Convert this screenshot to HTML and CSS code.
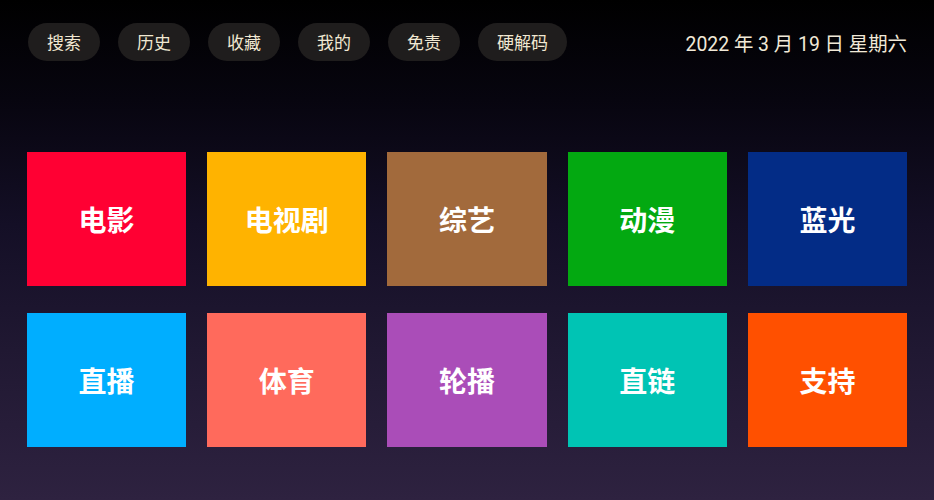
FILE: index.html
```html
<!DOCTYPE html>
<html lang="zh-CN">
<head>
<meta charset="utf-8">
<title>首页</title>
<link rel="stylesheet" href="styles.css">
</head>
<body>
<div class="screen">
  <header class="topbar">
    <nav class="pills">
      <span class="pill">搜索</span>
      <span class="pill">历史</span>
      <span class="pill">收藏</span>
      <span class="pill">我的</span>
      <span class="pill">免责</span>
      <span class="pill">硬解码</span>
    </nav>
    <div class="date">2022 年 3 月 19 日 星期六</div>
  </header>
  <main class="grid">
    <div class="tile t-movie">电影</div>
    <div class="tile t-tv">电视剧</div>
    <div class="tile t-variety">综艺</div>
    <div class="tile t-anime">动漫</div>
    <div class="tile t-bluray">蓝光</div>
    <div class="tile t-live">直播</div>
    <div class="tile t-sport">体育</div>
    <div class="tile t-carousel">轮播</div>
    <div class="tile t-link">直链</div>
    <div class="tile t-support">支持</div>
  </main>
</div>
</body>
</html>
```
FILE: styles.css
```css
html, body {
  margin: 0;
  padding: 0;
}
body {
  width: 934px;
  height: 500px;
  overflow: hidden;
  font-family: Roboto, "Noto Sans CJK SC", sans-serif;
  background: linear-gradient(to bottom, #000000 0%, #07050f 20%, #140f26 45%, #201832 70%, #2e2240 100%);
}
.screen {
  height: 500px;
  box-sizing: border-box;
  padding: 23px 27px 0 27px;
}
.topbar {
  display: flex;
  align-items: center;
  justify-content: space-between;
  height: 38px;
}
.pills {
  display: flex;
  gap: 18px;
  padding-left: 1px;
}
.pill {
  height: 38px;
  line-height: 38px;
  padding: 0 19px;
  border-radius: 19px;
  background: #1f1d1d;
  color: #f1e8d2;
  font-family: "Noto Sans CJK SC", sans-serif;
  font-size: 17px;
}
.date {
  color: #f1e9d8;
  font-size: 19.4px;
  font-family: Roboto, "Noto Sans CJK SC", sans-serif;
}
.grid {
  margin-top: 91px;
  display: grid;
  grid-template-columns: repeat(5, 1fr);
  grid-template-rows: 134px 134px;
  column-gap: 21px;
  row-gap: 27px;
}
.tile {
  display: flex;
  align-items: center;
  justify-content: center;
  color: #ffffff;
  font-family: "Noto Sans CJK SC", sans-serif;
  font-weight: 700;
  font-size: 28px;
}
.t-movie { background: #ff0033; }
.t-tv { background: #ffb300; }
.t-variety { background: #a26a3c; }
.t-anime { background: #03a911; }
.t-bluray { background: #032c86; }
.t-live { background: #00aeff; }
.t-sport { background: #ff6a5c; }
.t-carousel { background: #aa4db8; }
.t-link { background: #00c4b4; }
.t-support { background: #ff5000; }
```
